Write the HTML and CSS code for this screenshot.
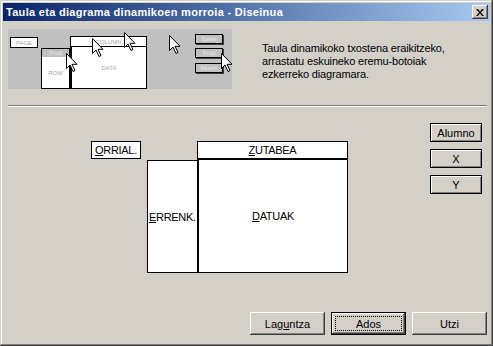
FILE: index.html
```html
<!DOCTYPE html>
<html lang="eu">
<head>
    <meta charset="UTF-8">
    <title>Taula eta diagrama dinamikoen morroia - Diseinua</title>
    <link rel="stylesheet" href="styles.css">
</head>
<body>
    <div class="window">
        <div class="titlebar">
            <span class="title">Taula eta diagrama dinamikoen morroia - Diseinua</span>
            <button class="close" aria-label="Itxi">
                <svg width="8" height="7" viewBox="0 0 8 7">
                    <path d="M0 0h2l2 2.5L6 0h2L5 3.5 8 7H6L4 4.5 2 7H0l3-3.5z" fill="#000"/>
                </svg>
            </button>
        </div>

        <div class="client">
            <div class="intro">
                <!-- aurrebista irudia -->
                <div class="preview">
                    <div class="pv-box pv-page">PAGE</div>
                    <div class="pv-box pv-column">COLUMN</div>
                    <div class="pv-btn pv-rowbtn">Prod</div>
                    <div class="pv-box pv-row">ROW</div>
                    <div class="pv-box pv-data">DATA</div>
                    <div class="pv-btn pv-f1">Sales</div>
                    <div class="pv-btn pv-f2">Prod</div>
                    <div class="pv-btn pv-f3">Month</div>
                    <svg class="cursor" style="left:84px;top:9px" width="12" height="19" viewBox="0 0 12 19"><path d="M.5.5v15l3.5-3.5 3 6.5 2-1-3-6.2h5z" fill="#fff" stroke="#000"/></svg>
                    <svg class="cursor" style="left:116px;top:3px" width="12" height="19" viewBox="0 0 12 19"><path d="M.5.5v15l3.5-3.5 3 6.5 2-1-3-6.2h5z" fill="#fff" stroke="#000"/></svg>
                    <svg class="cursor" style="left:161px;top:6px" width="12" height="19" viewBox="0 0 12 19"><path d="M.5.5v15l3.5-3.5 3 6.5 2-1-3-6.2h5z" fill="#fff" stroke="#000"/></svg>
                    <svg class="cursor" style="left:58px;top:24px" width="12" height="19" viewBox="0 0 12 19"><path d="M.5.5v15l3.5-3.5 3 6.5 2-1-3-6.2h5z" fill="#fff" stroke="#000"/></svg>
                    <svg class="cursor" style="left:213px;top:24px" width="12" height="19" viewBox="0 0 12 19"><path d="M.5.5v15l3.5-3.5 3 6.5 2-1-3-6.2h5z" fill="#fff" stroke="#000"/></svg>
                </div>
                <p class="hint">Taula dinamikoko txostena eraikitzeko,<br>arrastatu eskuineko eremu-botoiak<br>ezkerreko diagramara.</p>
            </div>

            <div class="rule"></div>

            <div class="design">
                <div class="layout">
                    <div class="zone zone-page"><u>O</u>RRIAL.</div>
                    <div class="zone zone-column"><u>Z</u>UTABEA</div>
                    <div class="zone zone-row"><u>E</u>RRENK.</div>
                    <div class="zone zone-data"><u>D</u>ATUAK</div>
                </div>
                <div class="fields">
                    <button class="field">Alumno</button>
                    <button class="field">X</button>
                    <button class="field">Y</button>
                </div>
            </div>

            <div class="actions">
                <button class="btn">Lag<u>u</u>ntza</button>
                <button class="btn btn-default"><span class="focus">Ados</span></button>
                <button class="btn">Utzi</button>
            </div>
        </div>
    </div>
</body>
</html>
```

FILE: styles.css
```css
body {
    margin: 0;
    font-family: 'Liberation Sans', Arial, sans-serif;
    font-size: 11px;
    color: #000;
    background-color: #d4d0c8;
}

button {
    font-family: inherit;
    font-size: 11px;
    color: #000;
    padding: 0;
    cursor: default;
}

/* leihoaren markoa */
.window {
    width: 493px;
    height: 346px;
    box-sizing: border-box;
    padding: 3px;
    display: flex;
    flex-direction: column;
    background-color: #d4d0c8;
    box-shadow: inset -1px -1px #404040, inset 1px 1px #d4d0c8,
                inset -2px -2px #808080, inset 2px 2px #fff;
}

.titlebar {
    height: 18px;
    display: flex;
    align-items: center;
    padding: 0 2px 0 3px;
    background: linear-gradient(to right, #0a246a, #a6caf0);
}

.title {
    flex: 1;
    color: #fff;
    font-weight: bold;
    font-size: 11px;
    letter-spacing: 0.3px;
    white-space: nowrap;
}

.close {
    width: 16px;
    height: 14px;
    border: none;
    background-color: #d4d0c8;
    display: flex;
    align-items: center;
    justify-content: center;
    box-shadow: inset -1px -1px #404040, inset 1px 1px #fff,
                inset -2px -2px #808080, inset 2px 2px #d4d0c8;
}

.client {
    flex: 1;
    display: flex;
    flex-direction: column;
    padding: 8px 3px 8px 5px;
}

.intro {
    display: flex;
}

/* aurrebista */
.preview {
    position: relative;
    width: 224px;
    height: 60px;
    background-color: #c0c0c0;
    font-size: 6px;
    color: #a8a8a8;
    overflow: hidden;
}

.pv-box {
    position: absolute;
    box-sizing: border-box;
    background-color: #fff;
    border: 1px solid #000;
    display: flex;
    align-items: center;
    justify-content: center;
}

.pv-page { left: 2px; top: 8px; width: 28px; height: 11px; }
.pv-column { left: 62px; top: 7px; width: 77px; height: 12px; border-bottom-width: 2px; }
.pv-row { left: 33px; top: 28px; width: 30px; height: 32px; border-right-width: 2px; border-top: none; }
.pv-data { left: 62px; top: 18px; width: 77px; height: 42px; border-left-width: 2px; border-top: none; }

.pv-btn {
    position: absolute;
    box-sizing: border-box;
    height: 10px;
    width: 28px;
    background-color: #c0c0c0;
    border: 1px solid #000;
    box-shadow: 1px 1px #404040;
    display: flex;
    align-items: center;
    justify-content: center;
    color: #e8e8e8;
    overflow: hidden;
}

.pv-rowbtn { left: 33px; top: 19px; width: 29px; box-shadow: none; }
.pv-f1 { left: 187px; top: 5px; }
.pv-f2 { left: 187px; top: 19px; }
.pv-f3 { left: 187px; top: 34px; }

.cursor {
    position: absolute;
}

.hint {
    margin: 13px 0 0 30px;
    line-height: 13px;
    letter-spacing: -0.15px;
}

.rule {
    margin-top: 16px;
    border-top: 1px solid #808080;
    border-bottom: 1px solid #fff;
    height: 0;
}

/* diseinua */
.design {
    display: flex;
    margin-top: 16px;
}

.layout {
    display: grid;
    grid-template-columns: 50px 6px 50px 151px;
    grid-template-rows: 19px 113px;
    margin: 18px 0 0 83px;
    letter-spacing: -0.3px;
}

.zone {
    box-sizing: border-box;
    background-color: #fff;
    border: 1px solid #000;
    display: flex;
    align-items: center;
    white-space: nowrap;
}

.zone-page {
    grid-column: 1;
    grid-row: 1;
    height: 18px;
    padding-left: 3px;
}

.zone-column {
    grid-column: 4;
    grid-row: 1;
    justify-content: center;
    border-bottom-width: 2px;
}

.zone-row {
    grid-column: 3;
    grid-row: 2;
    border-right: none;
    padding-left: 1px;
}

.zone-data {
    grid-column: 4;
    grid-row: 2;
    justify-content: center;
    border-top: none;
    border-left-width: 2px;
}

.fields {
    margin-left: auto;
    margin-right: 5px;
    display: flex;
    flex-direction: column;
    gap: 7px;
}

.field {
    width: 52px;
    height: 19px;
    background-color: #d4d0c8;
    border: 1px solid #000;
    box-shadow: inset 1px 1px #fff, inset -1px -1px #808080;
}

/* beheko botoiak */
.actions {
    margin-top: auto;
    display: flex;
    justify-content: flex-end;
    gap: 6px;
}

.btn {
    width: 75px;
    height: 23px;
    border: none;
    background-color: #d4d0c8;
    box-shadow: inset -1px -1px #404040, inset 1px 1px #fff,
                inset -2px -2px #808080, inset 2px 2px #d4d0c8;
}

.btn-default {
    border: 1px solid #000;
    padding: 3px;
}

.focus {
    display: flex;
    align-items: center;
    justify-content: center;
    height: 100%;
    border: 1px dotted #000;
    box-sizing: border-box;
}
```
